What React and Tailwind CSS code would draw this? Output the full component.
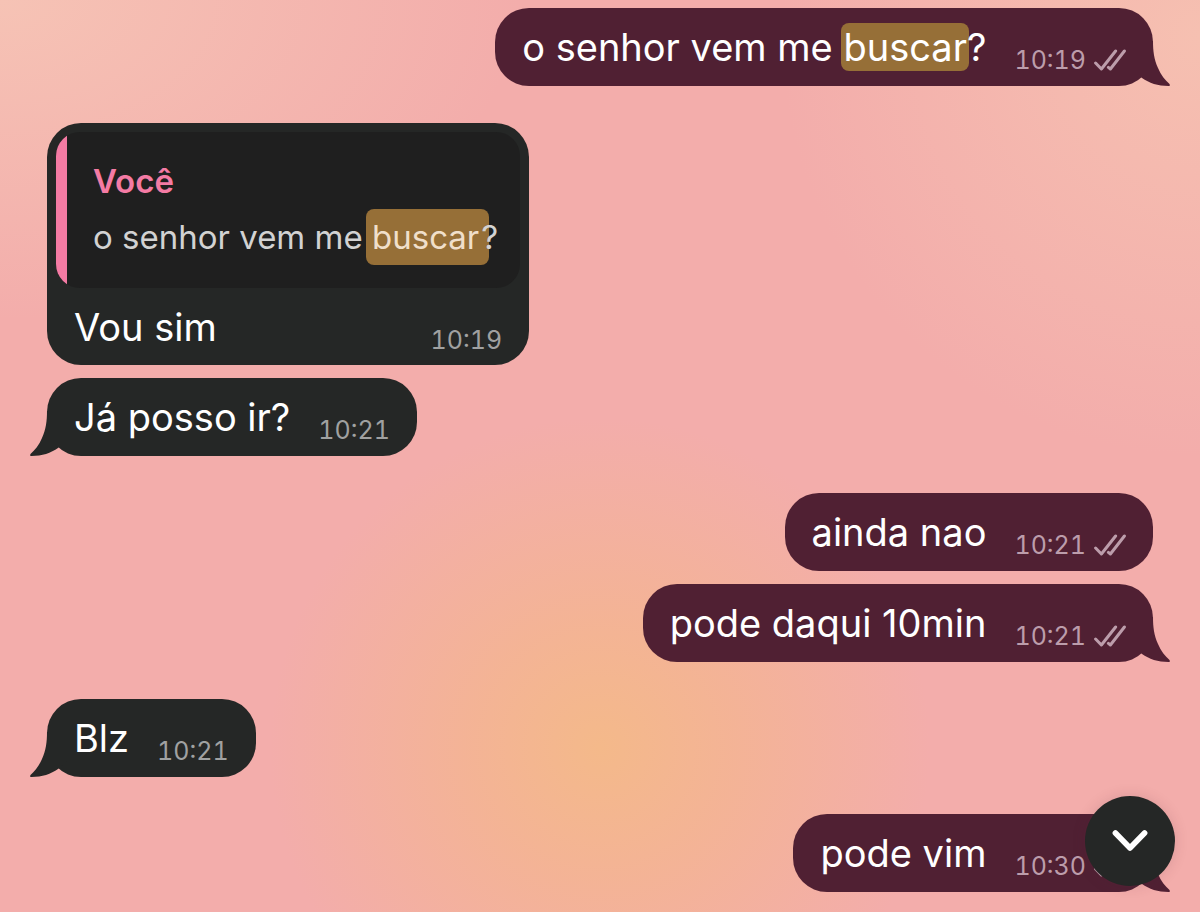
import React from "react";

const messages = [
  { id: 1, mine: true, tail: true, time: "10:19", body: <>o senhor vem me <Highlight>buscar</Highlight>?</> },
  { id: 2, quote: true, time: "10:19", body: "Vou sim" },
  { id: 3, tail: true, time: "10:21", body: "Já posso ir?", grouped: true },
  { id: 4, mine: true, time: "10:21", body: "ainda nao" },
  { id: 5, mine: true, tail: true, time: "10:21", body: "pode daqui 10min", grouped: true },
  { id: 6, tail: true, time: "10:21", body: "Blz" },
  { id: 7, mine: true, tail: true, time: "10:30", body: "pode vim" },
];

function Highlight({ children }) {
  return <mark className="-mx-0.5 rounded-lg bg-[#966f37] px-0.5 py-px text-inherit">{children}</mark>;
}

function Tail({ mine }) {
  return (
    <svg
      aria-hidden="true"
      viewBox="0 0 38 50"
      className={
        mine
          ? "absolute -right-[18px] bottom-0 h-[50px] w-[38px] fill-[#502033]"
          : "absolute -left-[18px] bottom-0 h-[50px] w-[38px] -scale-x-100 fill-[#252726]"
      }
    >
      <path d="M20 5C20 15 21 23 25 32C28 39 32 44 36.5 48Q37.6 50 35.5 50C25 50 16 47 9 42L0 34V5Z" />
    </svg>
  );
}

function Checks() {
  return (
    <svg
      aria-label="Entregue"
      role="img"
      viewBox="0 0 32 22"
      className="h-[22px] w-8 fill-none stroke-current"
      strokeWidth="3"
      strokeLinecap="round"
      strokeLinejoin="round"
    >
      <path d="M1.6 14L7.4 20L21.6 2M14.4 18.4L16.4 20L30.4 2" />
    </svg>
  );
}

function Quote() {
  return (
    <blockquote className="mx-[9px] mt-[9px] flex h-[156px] overflow-hidden rounded-3xl bg-[#1f1f1f]">
      <span className="w-[11px] shrink-0 bg-[#f47ba4]" />
      <div className="flex flex-col gap-4 pt-[29px] pr-[22px] pl-[26px]">
        <cite className="text-[33px] leading-10 font-semibold text-[#f47ba4] not-italic">Você</cite>
        <p className="text-[33px] leading-10 whitespace-nowrap text-[#d2d2d2]">
          o senhor vem me{" "}
          <mark className="-mr-2 -ml-1.5 rounded-lg bg-[#966f37] py-2 pr-2.5 pl-1.5 text-[#f0dfca]">buscar</mark>?
        </p>
      </div>
    </blockquote>
  );
}

function Message({ mine, tail, quote, grouped, time, body }) {
  return (
    <li className={`flex ${mine ? "justify-end" : "justify-start"} ${grouped ? "mt-[13px]" : "mt-[37px] first:mt-0"}`}>
      <article className={`relative rounded-[34px] ${mine ? "bg-[#502033]" : "bg-[#252726]"}`}>
        {quote && <Quote />}
        <div className={`flex items-start justify-between gap-7 px-[27px] ${quote ? "h-[77px]" : "h-[78px]"}`}>
          <p className="pt-[15px] text-[38px] leading-[48px] whitespace-nowrap text-white">{body}</p>
          <div className={`flex items-center gap-2 pt-[36px] ${mine ? "text-[#bc9dab]" : "text-[#a0a1a1]"}`}>
            <time className="text-[25px] leading-8 tabular-nums">{time}</time>
            {mine && <Checks />}
          </div>
        </div>
        {tail && <Tail mine={mine} />}
      </article>
    </li>
  );
}

export default function App() {
  return (
    <main className="relative min-h-screen overflow-hidden bg-[#f3adab] bg-[radial-gradient(circle_at_50%_82%,#f4b98a_0px,#f4b590cc_130px,#f3adab00_330px),radial-gradient(ellipse_520px_320px_at_0%_0%,#f6c3b5_0%,#f3adab00_100%),radial-gradient(circle_at_100%_4%,#f6c0b1_0px,#f3adab00_420px)] pt-2 pr-[47px] pb-5 pl-[47px] font-['Inter',sans-serif]">
      <ol className="flex flex-col">
        {messages.map(({ id, ...message }) => (
          <Message key={id} {...message} />
        ))}
      </ol>
      <button
        type="button"
        aria-label="Ir para o fim"
        className="absolute right-[25px] bottom-[26px] flex size-[90px] items-center justify-center rounded-full bg-[#252726] shadow-[0_0_14px_rgba(80,32,51,0.15)]"
      >
        <svg
          aria-hidden="true"
          viewBox="0 0 36 22"
          className="h-[22px] w-9 fill-none stroke-white"
          strokeWidth="5.6"
          strokeLinecap="round"
          strokeLinejoin="round"
        >
          <path d="M3.4 3L18 18L32.6 3" />
        </svg>
      </button>
    </main>
  );
}
